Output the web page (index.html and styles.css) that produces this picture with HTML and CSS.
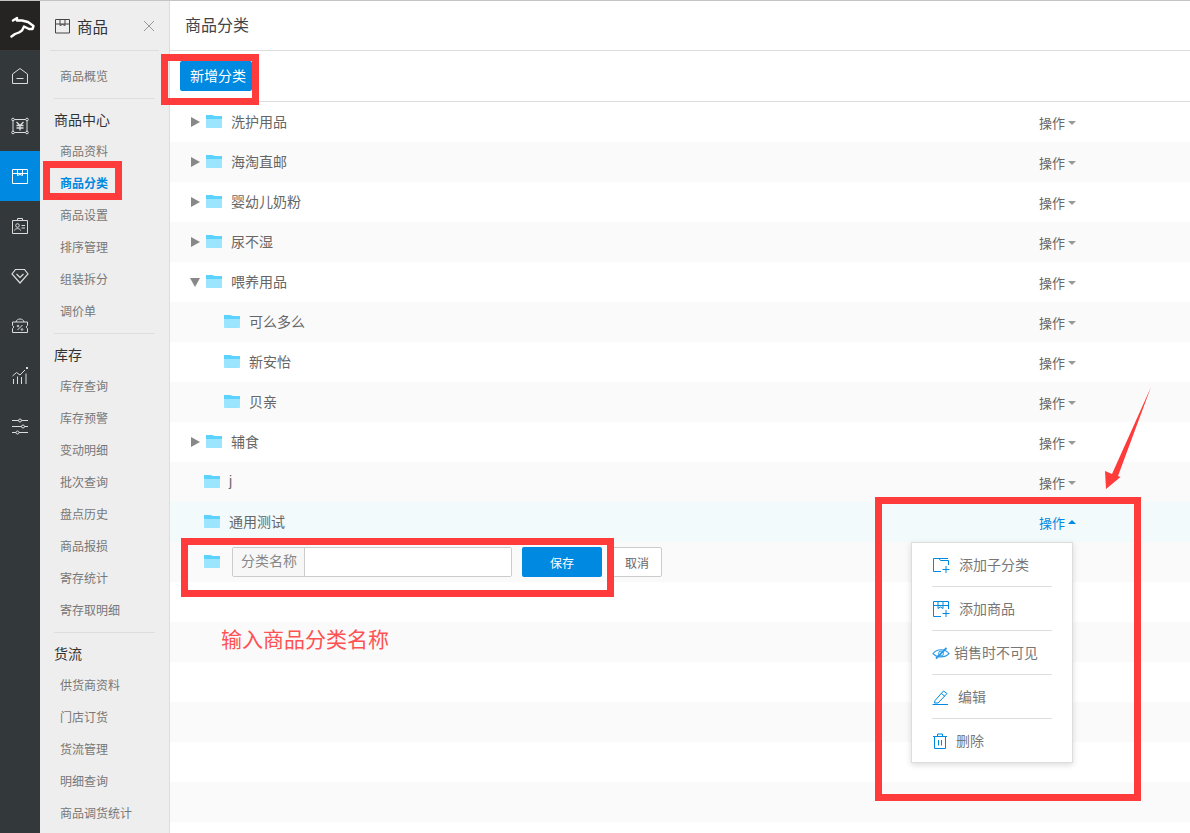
FILE: index.html
```html
<!DOCTYPE html>
<html lang="zh-CN">
<head>
<meta charset="utf-8">
<title>商品分类</title>
<link rel="stylesheet" href="styles.css">
</head>
<body>
<div class="app">
  <nav class="rail">
    <div class="logo">
      <svg width="30" height="24" viewBox="0 0 30 24" fill="none" stroke="#fff" stroke-width="2.400" stroke-linejoin="round" stroke-linecap="round"><path d="M8 6.500 12 4 12 6.500 17 6.500 23 8 28.500 12 27.500 15 24 15 19 12.500 17 16.500 14 18.500 10 20 6.500 22.500"/></svg>
    </div>
    <a class="rail-item"><svg width="18" height="18" viewBox="0 0 18 18" fill="none" stroke="currentColor"><path d="M1.500 7 9 1.500 16.500 7V16.500H1.500Z"/><path d="M5.500 11.500h7"/></svg></a>
    <a class="rail-item"><svg width="18" height="18" viewBox="0 0 18 18" fill="none" stroke="currentColor"><path d="M2 2.500H16V15.500H2Z"/><circle cx="2" cy="2.500" r="1.300" fill="#33383a"/><circle cx="16" cy="2.500" r="1.300" fill="#33383a"/><circle cx="2" cy="15.500" r="1.300" fill="#33383a"/><circle cx="16" cy="15.500" r="1.300" fill="#33383a"/><path d="M5.500 5 9 8.500 12.500 5M5.500 8.500H12.500M5.500 11H12.500M9 8.500V13.500" stroke-width="1.300"/></svg></a>
    <a class="rail-item rail-active"><svg width="18" height="18" viewBox="0 0 18 18" fill="none" stroke="currentColor"><path d="M1.500 2.500H16.500V16.500H1.500ZM1.500 6.500H16.500M6.500 2.500V8.500L9 7.500 11.500 8.500V2.500"/></svg></a>
    <a class="rail-item"><svg width="18" height="18" viewBox="0 0 18 18" fill="none" stroke="currentColor"><path d="M1.500 3.500H16.500V16.500H1.500ZM6.500 3.500V1.500H11.500V3.500M10.500 8.500H14M10.500 11H14"/><circle cx="6.500" cy="8.500" r="1.800"/><path d="M3.500 13.500C3.500 11 9.500 11 9.500 13.500"/></svg></a>
    <a class="rail-item"><svg width="18" height="18" viewBox="0 0 18 18" fill="none" stroke="currentColor"><path d="M4.500 2.500H13.500L17 7 9 16 1 7ZM5.500 7 9 10.500 12.500 7" stroke-width="1.200"/></svg></a>
    <a class="rail-item"><svg width="18" height="18" viewBox="0 0 18 18" fill="none" stroke="currentColor"><path d="M1.500 5H16.500V8.500C15 9 15 11 16.500 11.500V15.500H1.500V11.500C3 11 3 9 1.500 8.500ZM5 5C5.500 1 12.500 1 13 5M6.500 13 11.500 8"/><circle cx="7" cy="9" r=".8"/><circle cx="11" cy="12.500" r=".8"/></svg></a>
    <a class="rail-item"><svg width="18" height="18" viewBox="0 0 18 18" fill="none" stroke="currentColor"><path d="M1.500 9 5.500 5.500 9 8 14 3M2.500 17V12M6.500 17V9.500M10.500 17V10M15 17V6.500"/><rect x="15" y="0" width="2" height="2" fill="currentColor" stroke="none"/></svg></a>
    <a class="rail-item"><svg width="18" height="18" viewBox="0 0 18 18" fill="none" stroke="currentColor"><path d="M1 3.500H7.500M10.500 3.500H17M1 9.500H10.500M13.500 9.500H17M1 15.500H5M8 15.500H17"/><circle cx="9" cy="3.500" r="1.500"/><circle cx="12" cy="9.500" r="1.500"/><circle cx="6.500" cy="15.500" r="1.500"/></svg></a>
  </nav>

  <aside class="subnav">
    <div class="sub-head">
      <svg class="sub-icon" width="17" height="16" viewBox="0 0 17 16" fill="none" stroke="#444"><path d="M1.500 1.500H15.500V15H1.500ZM1.500 6H15.500M6 1.500V7.500L8.500 6.500 11 7.500V1.500"/></svg>
      <span class="sub-title">商品</span>
      <svg class="sub-close" width="12" height="12" viewBox="0 0 12 12" stroke="#999" fill="none"><path d="M1 1 11 11M11 1 1 11"/></svg>
    </div>
    <a class="sub-item sub-first">商品概览</a>
    <section class="sub-group">
      <h3 class="sub-label">商品中心</h3>
      <a class="sub-item">商品资料</a>
      <a class="sub-item sub-active">商品分类</a>
      <a class="sub-item">商品设置</a>
      <a class="sub-item">排序管理</a>
      <a class="sub-item">组装拆分</a>
      <a class="sub-item">调价单</a>
    </section>
    <section class="sub-group">
      <h3 class="sub-label">库存</h3>
      <a class="sub-item">库存查询</a>
      <a class="sub-item">库存预警</a>
      <a class="sub-item">变动明细</a>
      <a class="sub-item">批次查询</a>
      <a class="sub-item">盘点历史</a>
      <a class="sub-item">商品报损</a>
      <a class="sub-item">寄存统计</a>
      <a class="sub-item">寄存取明细</a>
    </section>
    <section class="sub-group">
      <h3 class="sub-label">货流</h3>
      <a class="sub-item">供货商资料</a>
      <a class="sub-item">门店订货</a>
      <a class="sub-item">货流管理</a>
      <a class="sub-item">明细查询</a>
      <a class="sub-item">商品调货统计</a>
    </section>
  </aside>

  <main class="main">
    <header class="page-head">商品分类</header>
    <div class="toolbar"><button class="btn btn-add">新增分类</button></div>
    <div class="tree">
      <div class="row has-caret"><i class="caret"></i><i class="folder"></i><span class="name">洗护用品</span><span class="act">操作<i class="act-caret"></i></span></div>
      <div class="row has-caret"><i class="caret"></i><i class="folder"></i><span class="name">海淘直邮</span><span class="act">操作<i class="act-caret"></i></span></div>
      <div class="row has-caret"><i class="caret"></i><i class="folder"></i><span class="name">婴幼儿奶粉</span><span class="act">操作<i class="act-caret"></i></span></div>
      <div class="row has-caret"><i class="caret"></i><i class="folder"></i><span class="name">尿不湿</span><span class="act">操作<i class="act-caret"></i></span></div>
      <div class="row has-caret"><i class="caret caret-open"></i><i class="folder"></i><span class="name">喂养用品</span><span class="act">操作<i class="act-caret"></i></span></div>
      <div class="row child"><i class="folder"></i><span class="name">可么多么</span><span class="act">操作<i class="act-caret"></i></span></div>
      <div class="row child"><i class="folder"></i><span class="name">新安怡</span><span class="act">操作<i class="act-caret"></i></span></div>
      <div class="row child"><i class="folder"></i><span class="name">贝亲</span><span class="act">操作<i class="act-caret"></i></span></div>
      <div class="row has-caret"><i class="caret"></i><i class="folder"></i><span class="name">辅食</span><span class="act">操作<i class="act-caret"></i></span></div>
      <div class="row leaf"><i class="folder"></i><span class="name">j</span><span class="act">操作<i class="act-caret"></i></span></div>
      <div class="row leaf row-open"><i class="folder"></i><span class="name">通用测试</span><span class="act act-open">操作<i class="act-caret act-caret-up"></i></span></div>
      <div class="row leaf row-form">
        <i class="folder"></i>
        <div class="field"><span class="field-label">分类名称</span><input class="field-input" type="text"></div>
        <button class="btn btn-save">保存</button>
        <button class="btn-cancel">取消</button>
      </div>
      <div class="row"></div>
      <div class="row"></div>
      <div class="row"></div>
      <div class="row"></div>
      <div class="row"></div>
      <div class="row"></div>
    </div>
  </main>

  <ul class="menu">
    <li class="menu-item"><svg class="mi" width="18" height="18" viewBox="0 0 18 18" fill="none" stroke="#0089e0"><path d="M9 15.500H1.500V2.500H7L8.500 4.500H16.500V9M7 2.500 16 2.500"/><path d="M10.500 13.500H17.500M14 10V17"/></svg><span class="mt mt-a">添加子分类</span></li>
    <li class="menu-item"><svg class="mi" width="18" height="18" viewBox="0 0 18 18" fill="none" stroke="#0089e0"><path d="M9 16.500H1.500V1.500H16.500V9M1.500 5.500H16.500M6 1.500V8.500L8.500 7 11 8.500V1.500"/><path d="M10.500 13.500H17.500M14 10V17"/></svg><span class="mt mt-a">添加商品</span></li>
    <li class="menu-item"><svg class="mi-eye" width="18" height="18" viewBox="0 0 18 18" fill="none" stroke="#2a9be6"><path d="M1 9.500C5 4.500 13 4.500 17 9.500 13 14 5 14 1 9.500Z" stroke-width="1.200"/><circle cx="9" cy="9.500" r="2.500"/><path d="M4 14.500 14.500 4" stroke-width="1.800"/></svg><span class="mt">销售时不可见</span></li>
    <li class="menu-item"><svg class="mi-pen" width="18" height="18" viewBox="0 0 18 18" fill="none" stroke="#0089e0"><path d="M3 12.500 11.500 3 15 5.500 6 15H2.500ZM9.500 5.500 13 8.500M.5 16.500H16"/></svg><span class="mt mt-b">编辑</span></li>
    <li class="menu-item"><svg class="mi-bin" width="16" height="18" viewBox="0 0 16 18" fill="none" stroke="#0089e0"><path d="M1 4.500H15M5.500 4.500V2H10.500V4.500M2.500 4.500V16.500H13.500V4.500M6.500 8V13.500M9.500 8V13.500"/></svg><span class="mt mt-c">删除</span></li>
  </ul>

  <div class="mark mark-add"></div>
  <div class="mark mark-nav"></div>
  <div class="mark mark-form"></div>
  <div class="mark mark-menu"></div>
  <p class="note">输入商品分类名称</p>
  <svg class="arrow" width="60" height="110" viewBox="0 0 60 110"><path d="M56 2 23 91 25.500 92 11 104 10 86 17 89Z" fill="#ff3b3b"/></svg>
</div>
</body>
</html>
```
FILE: styles.css
```css
* { box-sizing: border-box; }
html, body { margin: 0; padding: 0; height: 100%; overflow: hidden; background: #fff; }
body { font-family: "Liberation Sans", "Noto Sans CJK SC", sans-serif; color: #666; }
.app { position: relative; display: flex; width: 1190px; height: 833px; overflow: hidden; border-top: 1px solid #c4c4c4; }

.rail { flex: 0 0 40px; background: #33383a; color: #dcdcdc; }
.logo { height: 50px; background: #252422; border-bottom: 1px solid #3a3a3a; display: flex; align-items: center; justify-content: center; }
.rail-item { display: flex; align-items: center; justify-content: center; height: 50px; }
.rail-active { background: #0089e0; color: #fff; }

.subnav { flex: 0 0 130px; background: #eee; border-right: 1px solid #ddd; overflow: hidden; }
.sub-head { display: flex; align-items: center; height: 50px; margin-left: 10px; width: 109px; border-bottom: 1px solid #ddd; }
.sub-icon { margin-left: 4px; }
.sub-title { margin-left: 6px; font-size: 15.500px; color: #333; }
.sub-close { margin-left: auto; margin-right: 4px; }
.sub-item { display: block; height: 32px; line-height: 34px; padding-left: 20px; font-size: 12px; color: #777; white-space: nowrap; }
.sub-first { margin-top: 9px; }
.sub-group { margin: 6px 14px 0; border-top: 1px solid #ddd; padding-top: 6px; }
.sub-group .sub-item { margin-left: -14px; }
.sub-label { margin: 0; height: 30px; line-height: 30px; font-size: 14px; font-weight: 400; color: #333; }
.sub-active { color: #0089e0; font-weight: 700; }

.main { flex: 1; min-width: 0; }
.page-head { height: 50px; border-bottom: 1px solid #ddd; padding-left: 15px; line-height: 49px; font-size: 16px; color: #444; }
.toolbar { height: 51px; border-bottom: 1px solid #ddd; display: flex; align-items: center; padding: 0 10px 1px; }
.btn { border: 0; border-radius: 2px; background: #0089e0; color: #fff; font-family: inherit; height: 30px; padding: 0; }
.btn-add { width: 72px; padding-left: 4px; padding-bottom: 2px; font-size: 14px; }

.row { display: flex; align-items: center; height: 40px; font-size: 14px; padding-right: 114px; }
.row:nth-child(even) { background: #fafafa; }
.row.row-open { background: #f2fafc; }
.has-caret { padding-left: 20px; }
.child { padding-left: 54px; }
.leaf { padding-left: 34px; }
.caret { width: 0; height: 0; margin-right: 6px; margin-left: 1px; border-left: 9px solid #888; border-top: 5.500px solid transparent; border-bottom: 5.500px solid transparent; }
.caret-open { margin-left: 0; border-left: 5.500px solid transparent; border-right: 5.500px solid transparent; border-top: 9px solid #888; border-bottom: 0; margin-right: 6px; }
.folder { position: relative; width: 16px; height: 11px; margin-top: 1px; margin-right: 9px; background: #9be5ff; flex: none; border-radius: 0 1px 1px 1px; }
.folder::before { content: ""; position: absolute; left: 0; top: -2px; width: 16px; height: 4px; background: #5cd3ff; clip-path: polygon(0 0, 40% 0, 55% 25%, 100% 25%, 100% 100%, 0 100%); }
.name { color: #666; margin-top: -2px; }
.act { margin-left: auto; display: flex; align-items: center; font-size: 13px; color: #666; }
.act-caret { margin-left: 3px; width: 0; height: 0; border-left: 4px solid transparent; border-right: 4px solid transparent; border-top: 4px solid #999; margin-top: 1px; }
.act-open { color: #0089e0; }
.act-caret-up { border-top: 0; border-bottom: 4px solid #0089e0; margin-top: 0; }

.row-form { padding-right: 0; }
.row-form .folder { margin-right: 12px; }
.field { display: flex; width: 280px; height: 30px; border: 1px solid #ccc; border-radius: 2px; background: #fff; }
.field-label { flex: 0 0 72px; border-right: 1px solid #ccc; background: #f7f7f7; padding-left: 1px; text-align: center; line-height: 27px; font-size: 14px; color: #888; }
.field-input { flex: 1; min-width: 0; border: 0; outline: 0; background: #fff; }
.btn-save { width: 80px; margin-left: 10px; font-size: 12px; }
.btn-cancel { width: 50px; height: 30px; margin-left: 10px; border: 1px solid #ccc; border-radius: 2px; background: #fff; color: #666; font-family: inherit; font-size: 12px; padding: 0; }

.menu { position: absolute; left: 911px; top: 541px; width: 162px; height: 221px; margin: 0; padding: 0; list-style: none; background: #fff; border: 1px solid #ddd; box-shadow: 0 2px 6px rgba(0,0,0,.14); }
.menu-item { display: flex; align-items: center; height: 44px; margin: 0 20px; border-bottom: 1px solid #ddd; font-size: 14px; color: #777; }
.menu-item:last-child { border-bottom: 0; }
.mt { white-space: nowrap; margin-top: -2px; }
.mt-a { margin-left: 9px; }
.mt-b { margin-left: 8px; }
.mt-c { margin-left: 8px; }
.mi-eye { margin-right: 4px; }
.mark { position: absolute; border: 7px solid #ff3b3b; }
.mark-add { left: 161px; top: 53px; width: 98px; height: 51px; }
.mark-nav { left: 43px; top: 160px; width: 79px; height: 39px; }
.mark-form { left: 181px; top: 537px; width: 433px; height: 59px; }
.mark-menu { left: 875px; top: 496px; width: 266px; height: 304px; }
.note { position: absolute; left: 221px; top: 625px; margin: 0; font-size: 21px; line-height: 28px; color: #ff5252; white-space: nowrap; }
.arrow { position: absolute; left: 1095px; top: 384px; }
```
